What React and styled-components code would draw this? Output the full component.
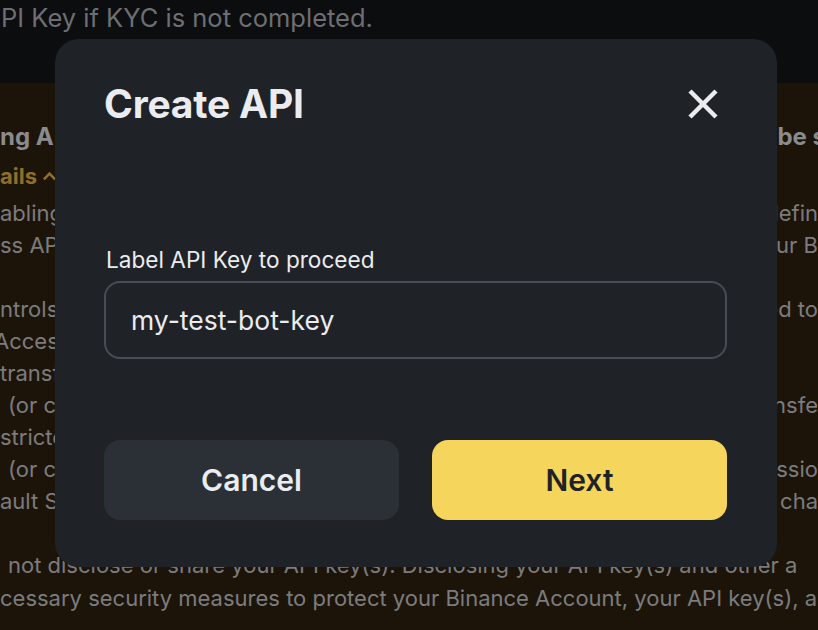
import React from "react";
import styled, { createGlobalStyle } from "styled-components";

const Global = createGlobalStyle`
  html, body { margin: 0; padding: 0; background: #1d1409; }
  body { font-family: "Inter", "Noto Sans", sans-serif; overflow: hidden; }
  * { box-sizing: border-box; }
`;

const Page = styled.div`
  position: relative;
  width: 818px;
  height: 630px;
  overflow: hidden;
  display: flex;
  flex-direction: column;
`;

const TopBand = styled.div`
  height: 83px;
  background: #0c0d0f;
  padding-top: 1px;
  overflow: hidden;
`;

const TopText = styled.div`
  font-size: 25.5px;
  line-height: 34px;
  color: #6d6f73;
  white-space: nowrap;
  padding-left: 1px;
`;

const Warning = styled.div`
  flex: 1;
  background: #1d1409;
  padding-top: 36px;
  display: flex;
  flex-direction: column;
`;

const Line = styled.div`
  display: flex;
  justify-content: space-between;
  align-items: center;
  white-space: nowrap;
  overflow: hidden;
  height: ${(p) => p.$h || 32}px;
  line-height: ${(p) => p.$h || 32}px;
  font-size: ${(p) => (p.$gold ? 22 : p.$bold ? 24 : 22)}px;
  font-weight: ${(p) => (p.$bold ? 700 : 400)};
  color: ${(p) => (p.$gold ? "#8d6f28" : p.$bold ? "#8a8b8d" : "#7b7c7e")};
`;

const LeftPart = styled.span`
  display: flex;
  align-items: center;
  margin-left: ${(p) => p.$shift || 0}px;
`;

const RightPart = styled.span`
  margin-right: ${(p) => p.$shift || 0}px;
`;

const Chevron = styled.svg`
  margin-left: 5px;
  flex: none;
`;

const Overlay = styled.div`
  position: absolute;
  left: 55px;
  top: 39px;
  width: 722px;
  background: #1f2227;
  border-radius: 24px;
  padding: 40px 50px 47px 49px;
  display: flex;
  flex-direction: column;
`;

const Header = styled.div`
  display: flex;
  align-items: center;
  justify-content: space-between;
  height: 50px;
`;

const Title = styled.h2`
  margin: 0;
  font-size: 39px;
  line-height: 48px;
  font-weight: 700;
  color: #eaecef;
  letter-spacing: -0.2px;
`;

const CloseButton = styled.button`
  background: none;
  border: none;
  padding: 0;
  width: 32px;
  height: 32px;
  margin-right: 8px;
  display: flex;
  align-items: center;
  justify-content: center;
  cursor: pointer;
`;

const Field = styled.div`
  margin-top: 117px;
  display: flex;
  flex-direction: column;
  gap: 7px;
`;

const Label = styled.label`
  font-size: 22.6px;
  line-height: 28px;
  color: #eaecef;
  padding-left: 2px;
`;

const Input = styled.input`
  height: 78px;
  border: 2px solid #474d57;
  border-radius: 16px;
  background: transparent;
  padding: 0 25px;
  font-family: inherit;
  font-size: 26.5px;
  color: #eaecef;
  outline: none;
`;

const Actions = styled.div`
  margin-top: 81px;
  display: grid;
  grid-template-columns: 1fr 1fr;
  gap: 33px;
`;

const Button = styled.button`
  height: 80px;
  border: none;
  border-radius: 16px;
  font-family: inherit;
  font-size: 30px;
  font-weight: 600;
  background: ${(p) => (p.$primary ? "#f5d55b" : "#2b2f36")};
  color: ${(p) => (p.$primary ? "#1f2227" : "#eaecef")};
  cursor: pointer;
`;

const bgLines = [
  { l: "ng A", r: "be s", bold: true, h: 36, rs: -8 },
  { l: "ails", r: "", bold: true, gold: true, h: 42, chevron: true },
  { l: "abling", r: "defin" },
  { l: "ss AP", r: "our B" },
  { l: "", r: "" },
  { l: "ntrols", r: "ed to" },
  { l: "Access", r: "", ls: -6 },
  { l: "transf", r: "" },
  { l: "(or co", r: "nsfe", ls: 8 },
  { l: "stricte", r: "" },
  { l: "(or co", r: "issio", ls: 8 },
  { l: "ault Se", r: "o cha" },
  { l: "", r: "" },
  { l: "not disclose or share your API key(s). Disclosing your API key(s) and other a", r: "", h: 33, ls: 8 },
  { l: "cessary security measures to protect your Binance Account, your API key(s), a", r: "", h: 33 },
];

export default function App() {
  return (
    <>
      <Global />
      <Page>
        <TopBand>
          <TopText>PI Key if KYC is not completed.</TopText>
        </TopBand>
        <Warning>
          {bgLines.map((ln, i) => (
            <Line key={i} $bold={ln.bold} $gold={ln.gold} $h={ln.h}>
              <LeftPart $shift={ln.ls}>
                {ln.l || "\u00a0"}
                {ln.chevron && (
                  <Chevron width="15" height="15" viewBox="0 0 16 16">
                    <path d="M2 11 L8 5 L14 11" stroke="#8d6f28" strokeWidth="2.8" fill="none" />
                  </Chevron>
                )}
              </LeftPart>
              <RightPart $shift={ln.rs}>{ln.r}</RightPart>
            </Line>
          ))}
        </Warning>
        <Overlay role="dialog" aria-label="Create API">
          <Header>
            <Title>Create API</Title>
            <CloseButton aria-label="Close">
              <svg width="32" height="32" viewBox="0 0 32 32">
                <path d="M3 3 L29 29 M29 3 L3 29" stroke="#eaecef" strokeWidth="4.5" fill="none" />
              </svg>
            </CloseButton>
          </Header>
          <Field>
            <Label>Label API Key to proceed</Label>
            <Input defaultValue="my-test-bot-key" />
          </Field>
          <Actions>
            <Button>Cancel</Button>
            <Button $primary>Next</Button>
          </Actions>
        </Overlay>
      </Page>
    </>
  );
}
